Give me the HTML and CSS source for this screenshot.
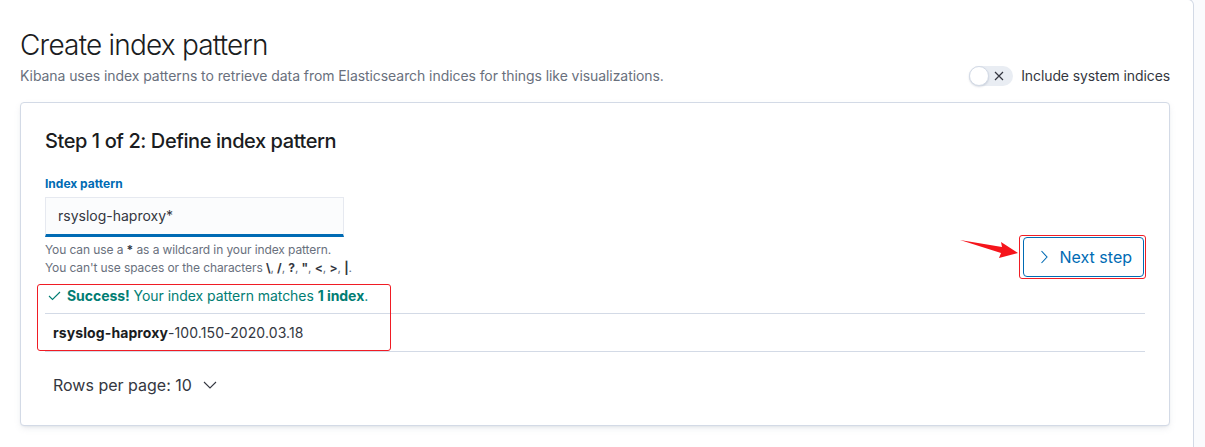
FILE: index.html
```html
<!DOCTYPE html>
<html lang="en">
<head>
<meta charset="utf-8">
<title>Create index pattern</title>
<link rel="stylesheet" href="styles.css">
</head>
<body>
<div class="page">
  <main class="panel">
    <header class="page-header">
      <div class="heading">
        <h1 class="title">Create index pattern</h1>
        <p class="subtitle">Kibana uses index patterns to retrieve data from Elasticsearch indices for things like visualizations.</p>
      </div>
      <div class="switch-group">
        <span class="switch">
          <span class="switch-knob"></span>
          <svg class="switch-x" width="10" height="10" viewBox="0 0 10 10"><path d="M1 1 L9 9 M9 1 L1 9" stroke="#343741" stroke-width="1.2" fill="none"/></svg>
        </span>
        <span class="switch-label">Include system indices</span>
      </div>
    </header>

    <section class="card">
      <h2 class="step-title">Step 1 of 2: Define index pattern</h2>
      <div class="define-row">
        <div class="form">
          <label class="form-label">Index pattern</label>
          <div class="input">rsyslog-haproxy*</div>
          <div class="help">
            <div>You can use a <b>*</b> as a wildcard in your index pattern.</div>
            <div>You can't use spaces or the characters <b>\</b>, <b>/</b>, <b>?</b>, <b>"</b>, <b>&lt;</b>, <b>&gt;</b>, <b>|</b>.</div>
          </div>
        </div>
        <div class="button-wrap">
          <button class="next-btn">
            <svg width="16" height="16" viewBox="0 0 16 16"><path d="M5.5 2 L11 8 L5.5 14" stroke="#006bb4" stroke-width="1.1" fill="none"/></svg>
            <span>Next step</span>
          </button>
          <span class="mark mark-btn"></span>
        </div>
      </div>
      <div class="success">
        <svg width="13" height="10" viewBox="0 0 13 10"><path d="M1 5 L4.5 8.5 L12 1" stroke="#017d73" stroke-width="1.1" fill="none"/></svg>
        <span><b>Success!</b> Your index pattern matches <b>1 index</b>.</span>
      </div>
      <div class="index-table">
        <div class="index-row"><b>rsyslog-haproxy</b>-100.150-2020.03.18</div>
      </div>
      <div class="pager">
        <span class="rows-btn">Rows per page: 10
          <svg width="14" height="8" viewBox="0 0 14 8"><path d="M1 1 L7 7 L13 1" stroke="#343741" stroke-width="1.1" fill="none"/></svg>
        </span>
      </div>
      <span class="mark mark-success"></span>
      <svg class="arrow" width="64" height="26" viewBox="0 0 64 26"><polygon points="2,3 44,10 43,5 60,16 41,21 43,16" fill="#f5141b"/></svg>
    </section>
  </main>
  <aside class="side"></aside>
</div>
</body>
</html>
```

FILE: styles.css
```css
html, body {
  margin: 0;
  padding: 0;
  height: 100%;
  overflow: hidden;
}
body {
  font-family: "Inter", "Noto Sans", sans-serif;
  color: #343741;
  background: #fafbfd;
}
.page {
  display: flex;
  height: 100%;
}
.panel {
  width: 1194px;
  box-sizing: border-box;
  flex: none;
  background: #fff;
  border: 1px solid #d3dae6;
  border-left: none;
  border-top-right-radius: 6px;
  margin-top: -1px;
  height: 600px;
  padding: 28px 23px 0 20px;
}
.side {
  flex: 1;
}
.page-header {
  display: flex;
  justify-content: space-between;
  align-items: flex-end;
}
.title {
  margin: 0;
  font-size: 28px;
  line-height: 34px;
  font-weight: 300;
  color: #1a1c21;
  letter-spacing: -0.8px;
}
.subtitle {
  margin: 3px 0 0;
  font-size: 14px;
  line-height: 21px;
  color: #69707d;
  letter-spacing: -0.07px;
}
.switch-group {
  display: flex;
  align-items: center;
  height: 21px;
  gap: 8px;
}
.switch {
  position: relative;
  width: 44px;
  height: 20px;
  border-radius: 10px;
  background: #e9edf3;
  display: flex;
  align-items: center;
  justify-content: flex-end;
  padding-right: 9px;
  box-sizing: border-box;
}
.switch-knob {
  position: absolute;
  left: 0;
  top: 0;
  width: 20px;
  height: 20px;
  box-sizing: border-box;
  border-radius: 50%;
  background: #fff;
  border: 1px solid #d3dae6;
  box-shadow: 0 1px 2px rgba(152,162,179,.4);
}
.switch-label {
  font-size: 14px;
  line-height: 21px;
  color: #343741;
  letter-spacing: -0.1px;
}
.card {
  position: relative;
  margin-top: 16px;
  background: #fff;
  border: 1px solid #d3dae6;
  border-radius: 4px;
  box-shadow: 0 1px 2px -1px rgba(152,162,179,.3), 0 3px 7px -2px rgba(152,162,179,.3);
  padding: 26px 24px 24px;
}
.step-title {
  margin: 0;
  font-size: 20px;
  line-height: 24px;
  font-weight: 500;
  color: #1a1c21;
  letter-spacing: -0.42px;
}
.define-row {
  margin-top: 22px;
  display: flex;
  justify-content: space-between;
  align-items: flex-end;
}
.form {
  width: 299px;
}
.form-label {
  display: block;
  font-size: 12px;
  line-height: 18px;
  font-weight: 700;
  color: #006bb4;
  margin-bottom: 4px;
}
.input {
  box-sizing: border-box;
  height: 40px;
  background: #fbfcfd;
  border: 1px solid #e6e9f0;
  border-bottom: 3px solid #006bb4;
  padding: 0 12px;
  font-size: 14px;
  line-height: 36px;
  color: #343741;
}
.help {
  margin-top: 4px;
  font-size: 12px;
  line-height: 18px;
  color: #69707d;
  white-space: nowrap;
  letter-spacing: -0.1px;
}
.help b {
  color: #343741;
}
.button-wrap {
  position: relative;
  display: flex;
  margin-right: 1px;
}
.next-btn {
  box-sizing: border-box;
  height: 40px;
  border: 1px solid #006bb4;
  border-radius: 4px;
  background: #fff;
  color: #006bb4;
  font-family: inherit;
  font-size: 16px;
  white-space: nowrap;
  display: flex;
  align-items: center;
  gap: 8px;
  padding: 0 11px 0 12px;
}
.mark {
  position: absolute;
  border: 1px solid #f01c24;
  border-radius: 3px;
  pointer-events: none;
}
.mark-btn {
  left: -4px;
  right: -2px;
  top: -2px;
  bottom: -2px;
  border-width: 1.5px;
}
.mark-success {
  left: 16px;
  top: 181px;
  width: 352px;
  height: 65px;
}
.arrow {
  position: absolute;
  left: 937px;
  top: 134px;
}
.success {
  margin-top: 8px;
  display: flex;
  align-items: center;
  gap: 6px;
  padding-left: 3px;
  font-size: 14px;
  line-height: 21px;
  color: #017d73;
  letter-spacing: -0.05px;
}
.index-table {
  margin-top: 7px;
  border-top: 1px solid #d3dae6;
  border-bottom: 1px solid #d3dae6;
}
.index-row {
  padding: 8px;
  font-size: 14px;
  line-height: 21px;
  color: #343741;
  letter-spacing: 0.1px;
}
.index-row b {
  color: #1a1c21;
}
.pager {
  margin-top: 17px;
  display: flex;
}
.rows-btn {
  display: flex;
  align-items: center;
  gap: 11px;
  height: 32px;
  padding: 0 8px;
  font-size: 16px;
  color: #343741;
}
```
